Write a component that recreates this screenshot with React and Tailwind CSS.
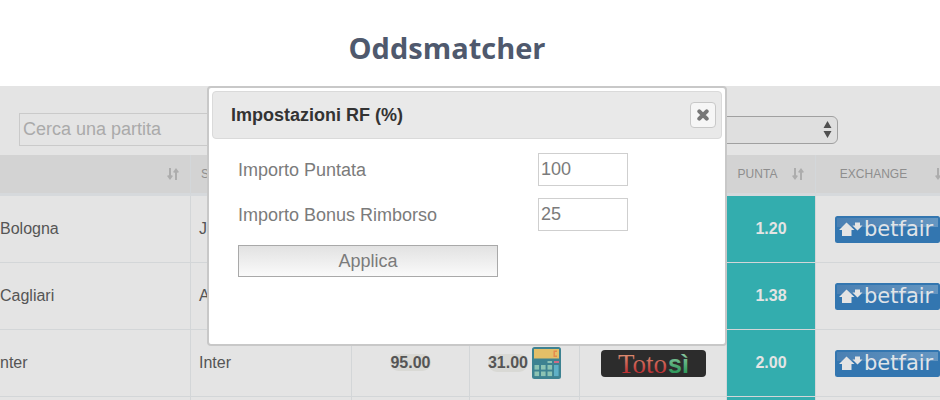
import React from 'react';

const matches = [
  { event: 'Bologna', pick: 'Juve', punta: '1.20' },
  { event: 'Cagliari', pick: 'Atalanta', punta: '1.38' },
  { event: 'nter', pick: 'Inter', rating: '95.00', quota: '31.00', punta: '2.00' },
  { event: '', pick: '', punta: '' },
];

const SortIcon = () => (
  <svg className="h-3.5 w-3 shrink-0" viewBox="0 0 12 14" fill="none" stroke="#adadad" strokeWidth="2">
    <path d="M3 1v10M9 13V3" />
    <path d="M0.7 8.6L3 11.6l2.3-3M6.7 5.4L9 2.4l2.3 3" strokeWidth="1.6" />
  </svg>
);

const CalculatorIcon = () => (
  <svg className="h-8 w-[29px]" viewBox="0 0 29 32">
    <rect width="29" height="32" rx="2.5" fill="#3d8291" />
    <rect x="2" y="2" width="25" height="9.5" fill="#e3bf68" />
    <path d="M25 4.2h-2.8v5H25" fill="none" stroke="#e48a4e" strokeWidth="1.4" />
    <rect x="15.5" y="14" width="4.5" height="2" fill="#8cc0b4" />
    <rect x="22" y="14" width="5" height="2" fill="#cf6a86" />
    <g fill="#8cc3b3">
      <rect x="2.5" y="18" width="4.6" height="4.6" />
      <rect x="9" y="18" width="4.6" height="4.6" />
      <rect x="15.5" y="18" width="4.6" height="4.6" />
      <rect x="2.5" y="24.5" width="4.6" height="4.6" />
      <rect x="9" y="24.5" width="4.6" height="4.6" />
      <rect x="15.5" y="24.5" width="4.6" height="4.6" />
    </g>
    <rect x="22" y="18" width="4.6" height="11.1" fill="#5fb0c6" />
  </svg>
);

const BetfairLogo = () => (
  <svg className="inline-block h-[27px] w-[105px]" viewBox="0 0 105 27" role="img" aria-label="betfair">
    <defs>
      <linearGradient id="betfairShine" x1="0" y1="0" x2="1" y2="0">
        <stop offset="0" stopColor="#4a80b3" />
        <stop offset="1" stopColor="#6596c1" />
      </linearGradient>
    </defs>
    <rect width="105" height="27" rx="2.5" fill="#3376b0" />
    <path d="M2 2h101v9Q50 11 2 11z" fill="url(#betfairShine)" />
    <path d="M11.500 6.500l8 7.500h-3v6h-9.500v-6H4z" fill="#e4e4e4" />
    <path d="M20 6.500h5v3h2.500L22.500 14.500 17.500 9.500H20z" fill="#e4e4e4" />
    <text x="29" y="20" fontSize="21" fill="#e0e4e8" className="font-['DejaVu_Sans']">betfair</text>
  </svg>
);

const TotosiLogo = () => (
  <svg className="inline-block h-[27px] w-[105px] overflow-visible" viewBox="0 0 105 27" role="img" aria-label="Totosì">
    <defs>
      <linearGradient id="totoRed" x1="0" y1="0" x2="0" y2="1">
        <stop offset="0.2" stopColor="#d98a70" />
        <stop offset="0.8" stopColor="#bd2f33" />
      </linearGradient>
      <linearGradient id="totoGreen" x1="0" y1="0" x2="0" y2="1">
        <stop offset="0.2" stopColor="#82c39a" />
        <stop offset="0.8" stopColor="#2f9a5c" />
      </linearGradient>
    </defs>
    <rect width="105" height="27" rx="4" fill="#2c2c2c" />
    <text x="17" y="23" fontSize="27" fill="url(#totoRed)" className="font-['Liberation_Serif']">Toto</text>
    <text x="67" y="23" fontSize="25" fill="url(#totoGreen)" className="font-['Liberation_Sans'] font-bold">sì</text>
  </svg>
);

const HeaderCell = ({ label, align = 'text-center' }) => (
  <th className="border-r border-[#d3d7da] p-0 font-normal">
    <div className="flex items-center gap-1 pr-[11px]">
      <span className={`flex-1 ${align}`}>{label}</span>
      <SortIcon />
    </div>
  </th>
);

const Badge = ({ children }) => (
  <span className="rounded-full bg-[#d9d9d5] font-bold leading-[18px]">{children}</span>
);

const SettingsDialog = () => (
  <div className="absolute inset-x-0 top-0 flex justify-center pr-1.5">
    <div role="dialog" aria-labelledby="dialog-title" className="h-[260px] w-[520px] rounded border-2 border-[#c8c8c8] bg-white p-[3px]">
      <div className="flex h-12 items-center justify-between rounded border border-[#dadada] bg-[#e9e9e9] pl-[18px] pr-[5px]">
        <h2 id="dialog-title" className="text-lg font-bold text-[#333]">Impostazioni RF (%)</h2>
        <button type="button" aria-label="Chiudi" className="flex size-[26px] items-center justify-center rounded border border-[#c8c8c8] bg-[#f6f6f6]">
          <svg className="size-3" viewBox="0 0 12 12" stroke="#777" strokeWidth="4" strokeLinecap="round">
            <path d="M2.300 2.300l7.400 7.400M9.700 2.300l-7.400 7.400" />
          </svg>
        </button>
      </div>
      <form className="pl-[26px] pt-3.5 text-lg text-[#7b7b7b]">
        <div className="mb-3 flex items-center">
          <label htmlFor="puntata" className="w-[300px]">Importo Puntata</label>
          <input id="puntata" defaultValue="100" className="h-[33px] w-[90px] border border-[#cfcfcf] px-0.5" />
        </div>
        <div className="mb-3.5 flex items-center">
          <label htmlFor="rimborso" className="w-[300px]">Importo Bonus Rimborso</label>
          <input id="rimborso" defaultValue="25" className="h-[33px] w-[90px] border border-[#cfcfcf] px-0.5" />
        </div>
        <button type="button" className="h-8 w-[260px] border border-[#a9a9a9] bg-linear-to-b from-[#e2e2e2] to-[#fafafa]">
          Applica
        </button>
      </form>
    </div>
  </div>
);

function App() {
  return (
    <div className="flex h-screen flex-col overflow-hidden bg-white font-['Liberation_Sans',Arial,sans-serif]">
      <header className="flex h-[86px] shrink-0 items-center justify-center pr-[46px] pt-2.5">
        <h1 className="font-['Open_Sans',sans-serif] text-[29px] leading-9 font-bold text-[#4f596d]">Oddsmatcher</h1>
      </header>

      <main className="relative flex-1 overflow-hidden bg-[#e4e4e4] pt-[27px]">
        <div className="flex items-center justify-between pb-[9px] pl-[19px] pr-[102px]">
          <input
            type="text"
            aria-label="Cerca una partita"
            placeholder="Cerca una partita"
            className="h-[33px] w-[280px] border border-[#cacaca] px-[3px] text-lg placeholder:text-[#aaa]"
          />
          <div className="relative">
            <select aria-label="Filtro" className="block h-7 w-[260px] appearance-none rounded-md border border-[#a0a0a0] bg-[#dfdfdf]">
              <option></option>
            </select>
            <svg className="pointer-events-none absolute right-1.5 top-[5px] h-[17px] w-[9px]" viewBox="0 0 9 17" fill="#505050">
              <path d="M4.500 0L8.500 7h-8zM4.500 17L8.500 10h-8z" />
            </svg>
          </div>
        </div>

        <table className="w-[calc(100%+19px)] table-fixed border-separate border-spacing-0 text-[#555]">
          <colgroup>
            <col />
            <col className="w-[161px]" />
            <col className="w-[118px]" />
            <col className="w-[110px]" />
            <col className="w-[147px]" />
            <col className="w-[89px]" />
            <col className="w-[143px]" />
          </colgroup>
          <thead>
            <tr className="h-[41px] bg-[#d3d3d3] text-xs text-[#8e8e8e] *:border-b-3 *:border-b-[#d6d9dc]">
              <HeaderCell label="" />
              <HeaderCell label="SEL." align="pl-2.5 text-left" />
              <HeaderCell label="" />
              <HeaderCell label="" />
              <HeaderCell label="" />
              <HeaderCell label="PUNTA" />
              <HeaderCell label="EXCHANGE" />
            </tr>
          </thead>
          <tbody>
            {matches.map((m, i) => (
              <tr key={i} className="h-[67px] text-base *:border-b *:border-r *:border-[#d3d6d8]">
                <td className="p-0">{m.event}</td>
                <td className="p-0 pl-2">{m.pick}</td>
                <td className="p-0 text-center">{m.rating && <Badge>{m.rating}</Badge>}</td>
                <td className="p-0">
                  {m.quota && (
                    <div className="flex items-center justify-center gap-1">
                      <Badge>{m.quota}</Badge>
                      <CalculatorIcon />
                    </div>
                  )}
                </td>
                <td className="p-0 text-center">{m.quota && <TotosiLogo />}</td>
                <td className="bg-[#33adae] p-0 text-center font-bold text-[#e4e4e4]">{m.punta}</td>
                <td className="p-0 text-center">{m.punta && <BetfairLogo />}</td>
              </tr>
            ))}
          </tbody>
        </table>

        <SettingsDialog />
      </main>
    </div>
  );
}

export default App;
